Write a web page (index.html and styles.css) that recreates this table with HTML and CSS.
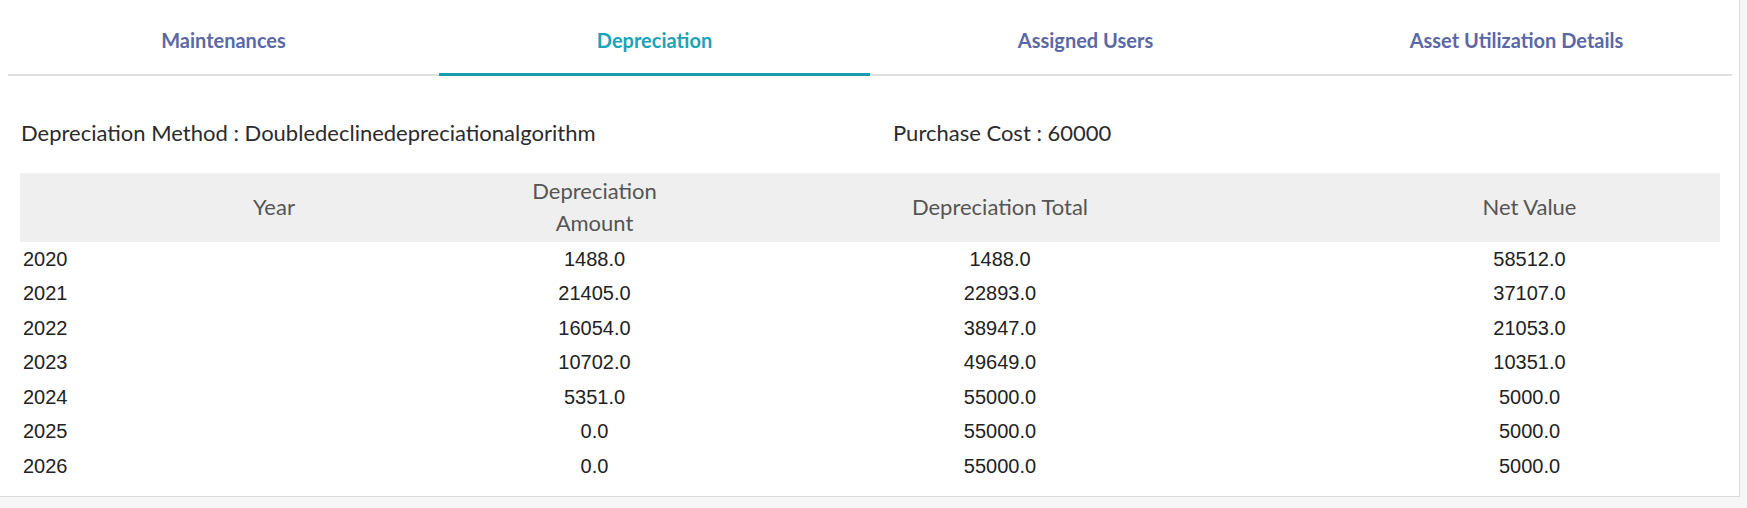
FILE: index.html
```html
<!DOCTYPE html>
<html lang="en">
<head>
<meta charset="utf-8">
<title>Depreciation</title>
<link rel="stylesheet" href="styles.css">
</head>
<body>
<div class="card">
  <nav class="tabs">
    <div class="tab">Maintenances</div>
    <div class="tab active">Depreciation</div>
    <div class="tab">Assigned Users</div>
    <div class="tab">Asset Utilization Details</div>
  </nav>
  <div class="info">
    <div class="info-item">Depreciation Method : Doubledeclinedepreciationalgorithm</div>
    <div class="info-item">Purchase Cost : 60000</div>
  </div>
  <div class="table-wrap">
    <table class="dep-table">
      <colgroup>
        <col class="c1"><col class="c2"><col class="c3"><col class="c4">
      </colgroup>
      <thead>
        <tr><th>Year</th><th>Depreciation Amount</th><th>Depreciation Total</th><th>Net Value</th></tr>
      </thead>
      <tbody>
        <tr><td>2020</td><td>1488.0</td><td>1488.0</td><td>58512.0</td></tr>
        <tr><td>2021</td><td>21405.0</td><td>22893.0</td><td>37107.0</td></tr>
        <tr><td>2022</td><td>16054.0</td><td>38947.0</td><td>21053.0</td></tr>
        <tr><td>2023</td><td>10702.0</td><td>49649.0</td><td>10351.0</td></tr>
        <tr><td>2024</td><td>5351.0</td><td>55000.0</td><td>5000.0</td></tr>
        <tr><td>2025</td><td>0.0</td><td>55000.0</td><td>5000.0</td></tr>
        <tr><td>2026</td><td>0.0</td><td>55000.0</td><td>5000.0</td></tr>
      </tbody>
    </table>
  </div>
</div>
</body>
</html>
```

FILE: styles.css
```css
html, body {
  margin: 0;
  padding: 0;
}
body {
  background: #f6f6f6;
  font-family: Lato, "Liberation Sans", sans-serif;
  color: #333;
}
.card {
  box-sizing: border-box;
  width: 1740px;
  background: #fff;
  border-right: 1px solid #dedede;
  border-bottom: 1px solid #dedede;
  padding: 0 7px 12px 8px;
}
.tabs {
  display: grid;
  grid-template-columns: repeat(4, 431px);
  border-bottom: 2px solid #dfdfdf;
}
.tab {
  position: relative;
  height: 74px;
  box-sizing: border-box;
  padding-top: 5px;
  display: flex;
  align-items: center;
  justify-content: center;
  font-family: Lato, sans-serif;
  font-weight: 700;
  font-size: 20px;
  color: #5a68a6;
}
.tab.active {
  color: #1ba3b9;
}
.tab.active::after {
  content: "";
  position: absolute;
  left: 0;
  right: 0;
  bottom: -2px;
  height: 3px;
  background: #179cae;
}
.info {
  display: grid;
  grid-template-columns: 872px 1fr;
  padding-left: 13px;
  margin-top: 43px;
  font-size: 22px;
  line-height: 28.57px;
  color: #2b2b2b;
}
.table-wrap {
  padding: 0 12px;
  margin-top: 25px;
}
.dep-table {
  width: 1700px;
  table-layout: fixed;
  border-collapse: collapse;
}
.c1 { width: 508px; }
.c2 { width: 133px; }
.c3 { width: 678px; }
.c4 { width: 381px; }
.dep-table th {
  background: #efefef;
  font-family: Lato, sans-serif;
  font-weight: 400;
  font-size: 22px;
  line-height: 32px;
  color: #555;
  padding: 2.5px 3px;
  height: 69px;
  box-sizing: border-box;
  text-align: center;
  vertical-align: middle;
}
.dep-table td {
  font-family: "Liberation Sans", Arial, sans-serif;
  font-size: 20px;
  line-height: 28.57px;
  padding: 3px 3px;
  color: #222;
  text-align: center;
}
.dep-table td:first-child {
  text-align: left;
}
```
